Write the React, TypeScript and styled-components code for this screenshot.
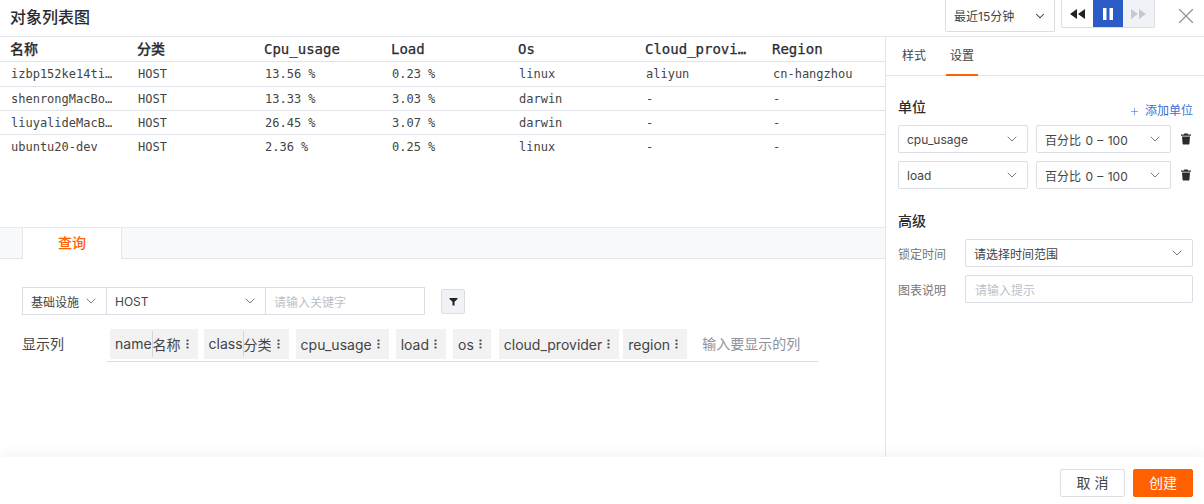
import React from 'react';
import styled, { createGlobalStyle } from 'styled-components';
import { ChevronDown, Plus, X } from 'lucide-react';

const SANS = `Inter, "Noto Sans CJK SC", sans-serif`;
const MONO = `"DejaVu Sans Mono", "Noto Sans CJK SC", monospace`;

const GlobalStyle = createGlobalStyle`
  html, body {
    margin: 0;
    padding: 0;
    background: #fff;
  }
  * {
    box-sizing: border-box;
  }
`;

const Page = styled.div`
  width: 1204px;
  height: 504px;
  display: flex;
  flex-direction: column;
  overflow: hidden;
  font-family: ${SANS};
  color: #333;
  background: #fff;
`;

const Header = styled.header`
  height: 37px;
  flex: none;
  display: flex;
  align-items: flex-start;
  padding-left: 10px;
  border-bottom: 1px solid #e4e6eb;
`;

const Title = styled.h1`
  margin: 0;
  flex: 1;
  font-size: 16px;
  line-height: 34px;
  font-weight: 500;
  color: #2a2b30;
`;

const RangeSelect = styled.div`
  width: 110px;
  height: 32px;
  display: flex;
  align-items: center;
  justify-content: space-between;
  padding: 0 7px 0 8px;
  font-size: 12px;
  color: #444;
  border: 1px solid #dcdee5;
  border-top: 0;
  border-radius: 0 0 2px 2px;
`;

const Player = styled.div`
  width: 94px;
  height: 28px;
  margin-left: 6px;
  display: flex;
  border: 1px solid #dcdee5;
  border-top: 0;
  border-radius: 0 0 2px 2px;
  overflow: hidden;
`;

const PlayerButton = styled.div<{ $tone: 'plain' | 'active' | 'muted' }>`
  flex: 1;
  display: flex;
  align-items: center;
  justify-content: center;
  color: ${p => (p.$tone === 'active' ? '#fff' : p.$tone === 'muted' ? '#c3c8d4' : '#222')};
  background: ${p => (p.$tone === 'active' ? '#2a5bc7' : p.$tone === 'muted' ? '#f1f2f5' : '#fff')};
`;

const CloseButton = styled.div`
  width: 49px;
  height: 32px;
  display: flex;
  align-items: center;
  justify-content: center;
  color: #8a8d96;
  padding-left: 12px;
`;

const Body = styled.div`
  flex: 1;
  min-height: 0;
  display: flex;
`;

const Main = styled.main`
  flex: 1;
  min-width: 0;
  display: flex;
  flex-direction: column;
`;

const TableArea = styled.section`
  height: 190px;
  flex: none;
  overflow: hidden;
  font-family: ${MONO};
`;

const Row = styled.div<{ $height: number }>`
  display: grid;
  grid-template-columns: repeat(7, 127px);
  width: 889px;
  height: ${p => p.$height}px;
  align-items: center;
  border-bottom: 1px solid #e2e3ea;
  &:last-child {
    border-bottom: 0;
  }
`;

const HeadCell = styled.div`
  padding-left: 10px;
  font-size: 14px;
  line-height: 20px;
  font-weight: 500;
  color: #2a2b30;
  white-space: nowrap;
  -webkit-text-stroke: 0.25px #2a2b30;
`;

const Cell = styled.div`
  padding-left: 11px;
  font-size: 12px;
  line-height: 18px;
  color: #444;
  white-space: nowrap;
`;

const QueryTabs = styled.div`
  height: 32px;
  flex: none;
  display: flex;
  padding-left: 22px;
  background: #f8f9fb;
  border-top: 1px solid #e9eaef;
  border-bottom: 1px solid #e4e6eb;
`;

const QueryTab = styled.div`
  width: 100px;
  height: 31px;
  text-align: center;
  line-height: 30px;
  font-size: 14px;
  font-weight: 500;
  color: #ff6000;
  background: #fff;
  border: 1px solid #e4e6eb;
  border-width: 0 1px;
`;

const QueryBody = styled.div`
  padding: 28px 0 0 22px;
`;

const QueryRow = styled.div`
  display: flex;
  align-items: flex-start;
`;

const Joined = styled.div`
  display: flex;
  height: 28px;
  border: 1px solid #dcdee5;
  font-size: 12px;
`;

const JoinedPart = styled.div<{ $width: number; $muted?: boolean }>`
  width: ${p => p.$width}px;
  display: flex;
  align-items: center;
  justify-content: space-between;
  padding: 0 7px 0 8px;
  color: ${p => (p.$muted ? '#bcbfc7' : '#444')};
  & + & {
    border-left: 1px solid #dcdee5;
  }
`;

const FilterButton = styled.div`
  width: 24px;
  height: 25px;
  margin: 2px 0 0 16px;
  display: flex;
  align-items: center;
  justify-content: center;
  background: #f1f2f6;
  border: 1px solid #dcdee5;
  border-radius: 2px;
  color: #222;
`;

const ColumnsRow = styled.div`
  display: flex;
  align-items: flex-start;
  margin-top: 14px;
`;

const ColumnsLabel = styled.div`
  width: 85px;
  font-size: 14px;
  line-height: 30px;
  color: #444;
`;

const ColumnsBox = styled.div`
  width: 711px;
  height: 33px;
  display: flex;
  align-items: flex-start;
  padding-left: 3px;
  border-bottom: 1px solid #dcdee5;
`;

const Tag = styled.div<{ $gap: number }>`
  height: 30px;
  display: flex;
  align-items: center;
  gap: 5px;
  margin-right: ${p => p.$gap}px;
  padding: 0 9px 0 5px;
  font-size: 14px;
  color: #444;
  background: #f2f2f3;
  white-space: nowrap;
`;

const TagKey = styled.span`
  display: inline-block;
  line-height: 26px;
  box-shadow: 1px 0 0 #d3d6e0;
  margin-right: -4px;
`;

const Dots = styled.svg`
  flex: none;
`;

const ColumnsPlaceholder = styled.div`
  margin-left: 9px;
  font-size: 14px;
  line-height: 30px;
  color: #8f929b;
`;

const Side = styled.aside`
  width: 319px;
  flex: none;
  border-left: 1px solid #e4e6eb;
`;

const SideTabs = styled.div`
  height: 39px;
  display: flex;
  gap: 20px;
  padding-left: 12px;
  border-bottom: 1px solid #e4e6eb;
`;

const SideTab = styled.div<{ $active?: boolean }>`
  height: 39px;
  padding: 0 4px;
  line-height: 37px;
  font-size: 12px;
  color: #444;
  margin-left: ${p => (p.$active ? '-4px' : '0')};
  border-bottom: 2px solid ${p => (p.$active ? '#ff6000' : 'transparent')};
`;

const SidePanel = styled.div`
  padding: 22px 11px 0 12px;
`;

const SectionHead = styled.div`
  height: 27px;
  display: flex;
  justify-content: space-between;
  align-items: flex-start;
`;

const SectionTitle = styled.h2`
  margin: 0;
  font-size: 14px;
  line-height: 18px;
  font-weight: 500;
  color: #2a2b30;
`;

const AddUnit = styled.div`
  display: flex;
  align-items: center;
  gap: 5px;
  margin-top: 4px;
  font-size: 12px;
  line-height: 18px;
  color: #3b6fd4;
`;

const UnitRow = styled.div`
  display: flex;
  align-items: center;
  gap: 8px;
  margin-bottom: 8px;
`;

const SelectBox = styled.div<{ $width: number }>`
  width: ${p => p.$width}px;
  height: 28px;
  flex: none;
  display: flex;
  align-items: center;
  justify-content: space-between;
  padding: 0 7px 0 8px;
  font-size: 12px;
  word-spacing: 1px;
  color: #444;
  border: 1px solid #dcdee5;
  border-radius: 2px;
`;

const Trash = styled.svg`
  margin-left: 1px;
  flex: none;
  color: #2a2b30;
`;

const Advanced = styled.div`
  margin-top: 23px;
`;

const FormRow = styled.div`
  display: flex;
  align-items: center;
  margin-bottom: 8px;
`;

const FormLabel = styled.div`
  width: 67px;
  font-size: 12px;
  color: #777;
`;

const TextBox = styled.div`
  width: 228px;
  height: 28px;
  display: flex;
  align-items: center;
  padding: 0 9px;
  font-size: 12px;
  color: #bcbfc7;
  border: 1px solid #dcdee5;
  border-radius: 2px;
`;

const Footer = styled.footer`
  height: 47px;
  flex: none;
  display: flex;
  justify-content: flex-end;
  align-items: flex-start;
  gap: 8px;
  padding: 12px 11px 0 0;
  background: #fff;
  box-shadow: 0 -6px 10px rgba(0, 0, 0, 0.035);
  position: relative;
`;

const FooterButton = styled.div<{ $primary?: boolean }>`
  width: ${p => (p.$primary ? '60px' : '65px')};
  height: 28px;
  text-align: center;
  line-height: 26px;
  font-size: 14px;
  border-radius: 2px;
  color: ${p => (p.$primary ? '#fff' : '#444')};
  background: ${p => (p.$primary ? '#ff6000' : '#fff')};
  border: 1px solid ${p => (p.$primary ? '#ff6000' : '#dcdee5')};
`;

const Chevron = () => <ChevronDown size={16} strokeWidth={1.4} color="#6b7180" />;

const DotsIcon = () => (
  <Dots width="3" height="10" viewBox="0 0 3 10">
    <rect x="0.5" y="0.5" width="2" height="2" fill="#555" />
    <rect x="0.5" y="4" width="2" height="2" fill="#555" />
    <rect x="0.5" y="7.5" width="2" height="2" fill="#555" />
  </Dots>
);

const TrashIcon = () => (
  <Trash width="12" height="12" viewBox="0 0 12 12">
    <path fill="currentColor" d="M4.3 0.6h3.4l.5 1H11v1.2H1V1.6h2.8zM2 3.6h8l-.6 7.3c0 .3-.3.5-.6.5H3.2c-.3 0-.6-.2-.6-.5z" />
  </Trash>
);

const rows = [
  ['izbp152ke14ti…', 'HOST', '13.56 %', '0.23 %', 'linux', 'aliyun', 'cn-hangzhou'],
  ['shenrongMacBo…', 'HOST', '13.33 %', '3.03 %', 'darwin', '-', '-'],
  ['liuyalideMacB…', 'HOST', '26.45 %', '3.07 %', 'darwin', '-', '-'],
  ['ubuntu20-dev', 'HOST', '2.36 %', '0.25 %', 'linux', '-', '-'],
];

const heads = ['名称', '分类', 'Cpu_usage', 'Load', 'Os', 'Cloud_provi…', 'Region'];

const tags: { key: string; alias?: string; gap: number }[] = [
  { key: 'name', alias: '名称', gap: 6 },
  { key: 'class', alias: '分类', gap: 7 },
  { key: 'cpu_usage', gap: 7 },
  { key: 'load', gap: 7 },
  { key: 'os', gap: 8 },
  { key: 'cloud_provider', gap: 4 },
  { key: 'region', gap: 6 },
];

export default function App() {
  return (
    <Page>
      <GlobalStyle />
      <Header>
        <Title>对象列表图</Title>
        <RangeSelect>
          最近15分钟
          <ChevronDown size={14} strokeWidth={1.8} color="#333" />
        </RangeSelect>
        <Player>
          <PlayerButton $tone="plain">
            <svg width="15" height="10" viewBox="0 0 15 10">
              <path fill="currentColor" d="M7 0v10L0 5zM15 0v10L8 5z" />
            </svg>
          </PlayerButton>
          <PlayerButton $tone="active">
            <svg width="10" height="12" viewBox="0 0 10 12">
              <path fill="currentColor" d="M0 0h3.5v12H0zM6.500 0H10v12H6.500z" />
            </svg>
          </PlayerButton>
          <PlayerButton $tone="muted">
            <svg width="15" height="10" viewBox="0 0 15 10">
              <path fill="currentColor" d="M0 0v10l7-5zM8 0v10l7-5z" />
            </svg>
          </PlayerButton>
        </Player>
        <CloseButton>
          <X size={26} strokeWidth={1} />
        </CloseButton>
      </Header>

      <Body>
        <Main>
          <TableArea>
            <Row $height={25}>
              {heads.map(h => (
                <HeadCell key={h}>{h}</HeadCell>
              ))}
            </Row>
            {rows.map((r, index) => (
              <Row key={r[0]} $height={index === 0 ? 25 : 24}>
                {r.map((c, i) => (
                  <Cell key={i}>{c}</Cell>
                ))}
              </Row>
            ))}
          </TableArea>

          <QueryTabs>
            <QueryTab>查询</QueryTab>
          </QueryTabs>

          <QueryBody>
            <QueryRow>
              <Joined>
                <JoinedPart $width={83}>
                  基础设施
                  <Chevron />
                </JoinedPart>
                <JoinedPart $width={159}>
                  HOST
                  <Chevron />
                </JoinedPart>
                <JoinedPart $width={159} $muted>
                  请输入关键字
                </JoinedPart>
              </Joined>
              <FilterButton>
                <svg width="9" height="9" viewBox="0 0 9 9">
                  <path fill="currentColor" d="M0.500 1h8v1L5.500 4.800V8.500h-2V4.800L0.500 2z" />
                </svg>
              </FilterButton>
            </QueryRow>

            <ColumnsRow>
              <ColumnsLabel>显示列</ColumnsLabel>
              <ColumnsBox>
                {tags.map(t => (
                  <Tag key={t.key} $gap={t.gap}>
                    {t.alias ? <TagKey>{t.key}</TagKey> : t.key}
                    {t.alias}
                    <DotsIcon />
                  </Tag>
                ))}
                <ColumnsPlaceholder>输入要显示的列</ColumnsPlaceholder>
              </ColumnsBox>
            </ColumnsRow>
          </QueryBody>
        </Main>

        <Side>
          <SideTabs>
            <SideTab>样式</SideTab>
            <SideTab $active>设置</SideTab>
          </SideTabs>
          <SidePanel>
            <SectionHead>
              <SectionTitle>单位</SectionTitle>
              <AddUnit>
                <Plus size={11} strokeWidth={1.3} />
                添加单位
              </AddUnit>
            </SectionHead>
            <UnitRow>
              <SelectBox $width={130}>
                cpu_usage
                <Chevron />
              </SelectBox>
              <SelectBox $width={135}>
                百分比 0 – 100
                <Chevron />
              </SelectBox>
              <TrashIcon />
            </UnitRow>
            <UnitRow>
              <SelectBox $width={130}>
                load
                <Chevron />
              </SelectBox>
              <SelectBox $width={135}>
                百分比 0 – 100
                <Chevron />
              </SelectBox>
              <TrashIcon />
            </UnitRow>

            <Advanced>
              <SectionHead>
                <SectionTitle>高级</SectionTitle>
              </SectionHead>
              <FormRow>
                <FormLabel>锁定时间</FormLabel>
                <SelectBox $width={228}>
                  请选择时间范围
                  <Chevron />
                </SelectBox>
              </FormRow>
              <FormRow>
                <FormLabel>图表说明</FormLabel>
                <TextBox>请输入提示</TextBox>
              </FormRow>
            </Advanced>
          </SidePanel>
        </Side>
      </Body>

      <Footer>
        <FooterButton>取 消</FooterButton>
        <FooterButton $primary>创建</FooterButton>
      </Footer>
    </Page>
  );
}
